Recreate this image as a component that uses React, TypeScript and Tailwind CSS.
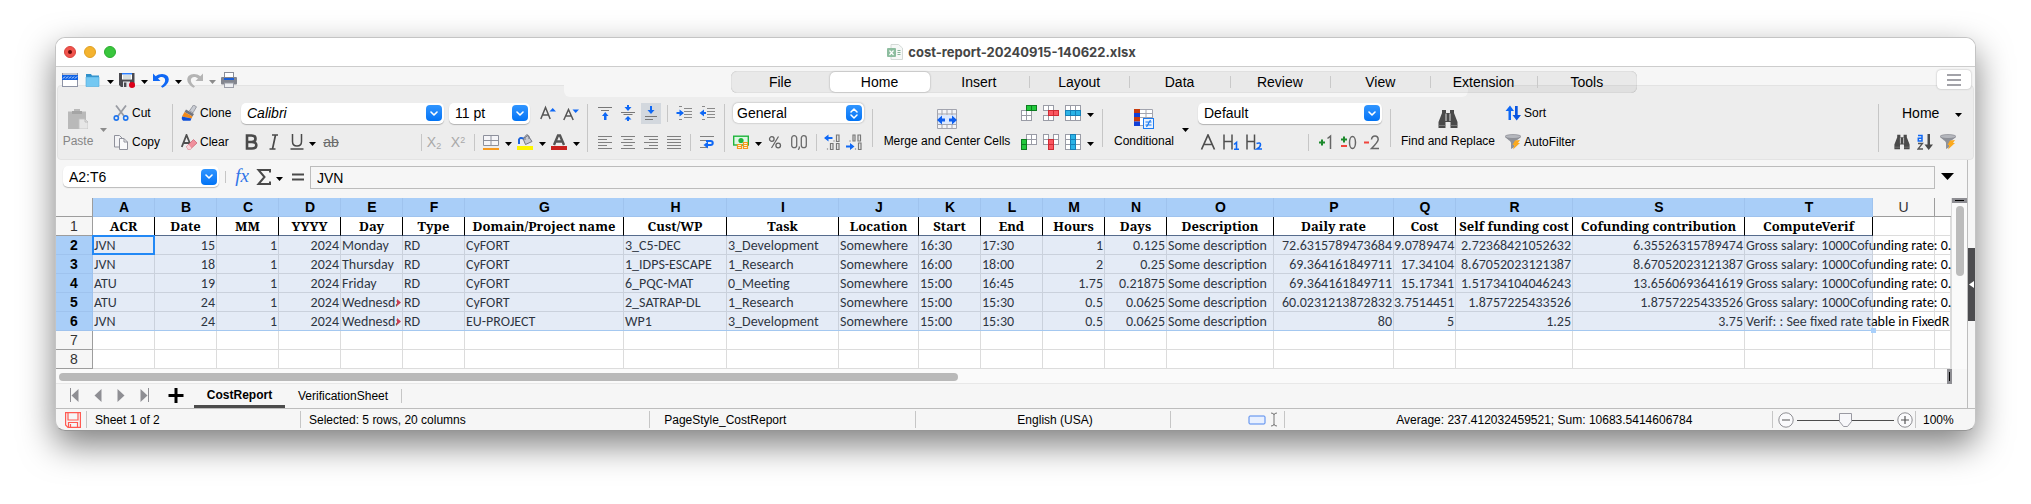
import React from "react";
import type { ReactNode } from "react";

/* ---------- drawing helpers ---------- */

function Ic({ s = 16, vb = 16, children }: { s?: number; vb?: number; children: ReactNode }) {
  return (
    <svg width={s} height={s} viewBox={`0 0 ${vb} ${vb}`} fill="none" className="shrink-0" aria-hidden="true">
      {children}
    </svg>
  );
}

function Caret({ label, dim = false }: { label: string; dim?: boolean }) {
  return (
    <button aria-label={label} className="flex h-5 w-[10px] shrink-0 items-center justify-center pt-1">
      <svg width="7" height="4" viewBox="0 0 7 4" aria-hidden="true">
        <path d="M0 0H7L3.5 4Z" fill={dim ? "#8c8c8c" : "#000"} />
      </svg>
    </button>
  );
}

function Tool({ label, on = false, children }: { label: string; on?: boolean; children: ReactNode }) {
  return (
    <button
      aria-label={label}
      className={"flex h-[21px] w-5 shrink-0 items-center justify-center " + (on ? "bg-[#d3d8de]" : "")}
    >
      {children}
    </button>
  );
}

function Sep({ tall = "h-[48px]" }: { tall?: string }) {
  return <div className={"w-px shrink-0 self-center bg-[#c6c6c6] " + tall} />;
}

function Chevron() {
  return (
    <span className="flex size-4 shrink-0 items-center justify-center rounded bg-linear-to-b from-[#2f95ff] to-[#0073f5]">
      <svg width="8" height="5" viewBox="0 0 8 5" fill="none" aria-hidden="true">
        <path d="M1 1L4 4L7 1" stroke="#fff" strokeWidth="1.6" strokeLinecap="round" strokeLinejoin="round" />
      </svg>
    </span>
  );
}

function Combo({ label, value, className }: { label: string; value: string; className: string }) {
  return (
    <div className={"flex h-[21px] shrink-0 items-center rounded-[5px] bg-white pr-[2px] pl-[6px] shadow-[0_1px_1px_rgba(0,0,0,0.25)] " + className}>
      <input aria-label={label} defaultValue={value} className="h-5 w-full min-w-0 bg-transparent text-sm leading-5 outline-none" />
      <button aria-label={`Open ${label}`} className="shrink-0">
        <Chevron />
      </button>
    </div>
  );
}

/* ---------- icons ---------- */

const Calc = () => (
  <Ic>
    <rect x="0.5" y="1.5" width="15" height="13" fill="#fff" stroke="#8d93a5" />
    <rect x="1" y="1" width="14" height="2" fill="#c2c6d2" />
    <rect x="0" y="3" width="16" height="5" fill="#0f62e6" />
    <path d="M1 6.5l2-2M4 6.5l2-2M7 6.5l2-2M10 6.5l2-2M13 6.5l2-2" stroke="#fff" strokeWidth="0.9" />
  </Ic>
);
const Folder = () => (
  <Ic>
    <path d="M1 2h5l1 1.5h7V14H1Z" fill="#2f8fc9" />
    <path d="M1 5h13v9.5H1Z" fill="#74c8f2" stroke="#4aa9dc" strokeWidth="0.6" />
  </Ic>
);
const Save = () => (
  <Ic>
    <path d="M0 1h15.5v14H2l-2-2Z" fill="#4a4a4f" />
    <rect x="3" y="1" width="10" height="6.5" fill="#fff" />
    <path d="M3 1.7h10" stroke="#2a7fff" strokeWidth="1.4" />
    <path d="M4 4h8M4 6h8" stroke="#9aa" strokeWidth="0.8" />
    <rect x="4" y="9.5" width="7" height="5.5" fill="#e3e5ea" />
    <rect x="5" y="10.5" width="2.4" height="4.5" fill="#4a4a4f" />
    <circle cx="13" cy="13" r="3" fill="#dc0019" />
  </Ic>
);
const Turn = ({ flip = false }: { flip?: boolean }) => (
  <Ic>
    <g transform={flip ? "translate(16 0) scale(-1 1)" : undefined}>
      <path d="M0 1.5V9H7.5L5 6.6C6.5 5 9.5 4.300 11.300 6C13 7.700 12.300 11 8 14.500L9.500 15.800C15.500 12.500 17.300 7.500 14.500 4C11.500 1 6 1.300 2.700 4.300Z" fill={flip ? "#b4b4b4" : "#0f68f5"} />
    </g>
  </Ic>
);
const Printer = () => (
  <Ic>
    <rect x="3.5" y="0.5" width="9" height="5" fill="#fff" stroke="#8a8e99" />
    <rect x="0" y="5" width="16" height="7.5" rx="1" fill="#83868f" />
    <rect x="3" y="6" width="10" height="2" fill="#1a5fd8" />
    <rect x="3.500" y="11" width="9" height="4.500" fill="#eceef2" stroke="#9a9da8" />
  </Ic>
);
const PasteIcon = () => (
  <Ic s={20} vb={20}>
    <path d="M0 2.500h6V0h6v2.500h6V20H0Z" fill="#b9b9b9" />
    <rect x="4" y="2" width="10" height="3" fill="#a5a5a5" />
    <path d="M11 10h6l3 3v7h-9Z" fill="#e6e6e6" stroke="#c2c2c2" strokeWidth="0.8" />
    <path d="M17 10v3h3" stroke="#b5b5b5" strokeWidth="0.8" />
  </Ic>
);
const CutIcon = () => (
  <Ic>
    <path d="M3 0.500L11 11M13 0.500L5 11" stroke="#9a9ca3" strokeWidth="1.800" />
    <circle cx="3.300" cy="13" r="2.100" stroke="#1f75ee" strokeWidth="1.600" />
    <circle cx="12.700" cy="13" r="2.100" stroke="#1f75ee" strokeWidth="1.600" />
  </Ic>
);
const CopyIcon = () => (
  <Ic>
    <path d="M1.500 1.500h5l3 3v8.500h-8Z" fill="#f3f3f5" stroke="#8f919b" />
    <path d="M6.500 4.500h4.500l3.500 3.500v7.500h-8Z" fill="#fafafb" stroke="#8f919b" />
    <path d="M11 4.500v3.500h3.500" stroke="#8f919b" />
  </Ic>
);
const CloneIcon = () => (
  <Ic>
    <path d="M12.500 0l3 1.800-3.500 6-3.500-2Z" fill="#c9ccd3" stroke="#80838d" strokeWidth="0.700" />
    <path d="M5 4.500l8 4.500-1.500 2.500-8-4.500Z" fill="#72757f" />
    <path d="M3.500 7l8 4.500-1 2-9.500-2Z" fill="#f08a1d" />
    <path d="M1 11.500l9.500 2-1 2.200H2Q0 14 1 11.500Z" fill="#0d4fd8" />
  </Ic>
);
const ClearIcon = () => (
  <Ic>
    <path d="M0.800 13L5.500 1L10 12M2.500 9h6" stroke="#505050" strokeWidth="1.800" />
    <path d="M5.500 12.500L12.500 5.500L16 9L9 15.500H7Z" fill="#f0909d" stroke="#cc5f70" strokeWidth="0.700" />
    <path d="M5.500 12.500l2-2 3 3.500-1.500 1.500H7Z" fill="#fbd5da" />
  </Ic>
);
const SizeIcon = ({ up }: { up: boolean }) => (
  <Ic>
    <path d={up ? "M0.800 14L5.500 2.500L10.200 14M2.500 10h6" : "M0.800 15L5.500 4.500L10.200 15M2.500 11h6"} stroke="#555" strokeWidth="1.500" />
    <path d={up ? "M9.500 6.500h6.500L12.700 3Z" : "M9.500 4.500h6.500L12.700 8Z"} fill="#0f68f5" />
  </Ic>
);
const Lines = ({ kind }: { kind: "l" | "c" | "r" | "j" }) => {
  const [a, b] = { l: [1, 10], c: [3.5, 12.5], r: [6, 15], j: [1, 15] }[kind];
  return (
    <Ic>
      <path d={`M1 2.500H15M${a} 5.500H${b}M1 8.500H15M${a} 11.500H${b}M1 14.500H15`} stroke="#808080" />
    </Ic>
  );
};
const VTop = () => (
  <Ic>
    <path d="M1 2.500H15M4 5.500H12" stroke="#777" />
    <path d="M7 15h2.500v-4h2L8.200 7L5 11h2Z" fill="#0f68f5" />
  </Ic>
);
const VMid = () => (
  <Ic>
    <path d="M1 7.500H15M3.500 9.500H12.500" stroke="#777" />
    <path d="M7 0h2v2h2.500L8 6L4.500 2H7ZM7 16.500h2v-2h2.500L8 11l-3.500 3.500H7Z" fill="#0f68f5" />
  </Ic>
);
const VBot = () => (
  <Ic>
    <path d="M2 11.500H14M2 14.500H10" stroke="#777" />
    <path d="M7 1h2v4h2.500L8 9L4.500 5H7Z" fill="#0f68f5" />
  </Ic>
);
const Indent = ({ left = false }: { left?: boolean }) => (
  <Ic>
    <path d="M3 1.500H6M8 3.500H16M8 6.500H16M8 9.500H16M8 12.500H16M3 14.500H6" stroke="#8a8a8a" />
    <path d={left ? "M7 7v2H5v2.500L0.500 8L5 4.500V7Z" : "M0.500 7v2h3v2.500L8 8L3.500 4.500V7Z"} fill="#0f68f5" />
  </Ic>
);
const Wrap = () => (
  <Ic>
    <path d="M1 2.500H15M1 6.500H7M1 13.500H8" stroke="#808080" />
    <path d="M7 7H11.500C14.500 7 14.500 11 11.500 11H8" stroke="#0f68f5" strokeWidth="2" />
    <path d="M9 7.500v7L4.500 11Z" fill="#0f68f5" />
  </Ic>
);
const BordersIcon = () => (
  <Ic>
    <path d="M0.500 1.500h15v10h-15ZM8 1.500v10M0.500 6.500h15" stroke="#8d909c" fill="#f5f5f8" />
    <rect x="0" y="14" width="16" height="2" fill="#f79a1e" />
  </Ic>
);
const FillIcon = () => (
  <Ic>
    <path d="M6 4.500L11 1.500L15 7.500L8.500 10.500Z" fill="#c7cad2" stroke="#747782" />
    <path d="M8 6V2.500Q10 -1 12 2.500V5" stroke="#747782" />
    <path d="M2 10V5.500Q3 3 6.500 4.500" stroke="#1c64dd" strokeWidth="2" />
    <rect x="0" y="12" width="16" height="4" fill="#fdf500" />
  </Ic>
);
const ColorIcon = () => (
  <Ic>
    <path d="M3 11L7 1.500h2L13 11M5 7.500h6" stroke="#555" strokeWidth="2.400" />
    <rect x="0" y="12" width="16" height="4" fill="#c9211e" />
  </Ic>
);
const Money = () => (
  <Ic>
    <rect x="0.700" y="2.200" width="14.600" height="8.800" fill="#dff7e4" stroke="#1fb53c" strokeWidth="1.400" />
    <circle cx="8" cy="6.500" r="2.600" fill="#1fb53c" />
    <path d="M4 10h5v5H4ZM10 8h5v7h-5Z" fill="#fff3df" />
    <path d="M4.500 10.500h4v4h-4ZM4.500 12.500h4M10.500 8.500h4v6h-4ZM10.500 10.500h4M10.500 12.500h4" stroke="#f59a1c" strokeWidth="1.200" />
  </Ic>
);
const PercentIcon = () => (
  <Ic>
    <circle cx="4.800" cy="5" r="2.300" stroke="#636363" strokeWidth="1.300" />
    <circle cx="11.200" cy="11.500" r="2.300" stroke="#636363" strokeWidth="1.300" />
    <path d="M11.500 2.500L4.500 14" stroke="#636363" strokeWidth="1.200" />
  </Ic>
);
const NumberIcon = () => (
  <Ic>
    <rect x="0.700" y="1.700" width="5" height="12" rx="2.500" stroke="#6a6a6a" strokeWidth="1.300" />
    <rect x="10.300" y="1.700" width="5" height="12" rx="2.500" stroke="#6a6a6a" strokeWidth="1.300" />
    <path d="M8.300 12.500v1.500l-1 1.800" stroke="#6a6a6a" strokeWidth="1.300" />
  </Ic>
);
const Decimal = ({ add = false }: { add?: boolean }) => (
  <Ic>
    {add ? (
      <>
        <path d="M4 7.500v-1M7 1h2v6H7ZM12 1h2.500v6H12Z" stroke="#777" strokeWidth="1.200" />
        <path d="M9.500 15.500v-1M12.500 9h2.500v6.500h-2.500Z" stroke="#777" strokeWidth="1.200" />
        <path d="M0 11.500h4V9L8.500 12.500L4 16v-2.500H0Z" fill="#0f68f5" />
      </>
    ) : (
      <>
        <path d="M8.500 3H4.500V0.500L0 4l4.500 3.500V5h4Z" fill="#0f68f5" />
        <path d="M10 7.500v-1M12.500 1H15v6.500h-2.500ZM3.500 15.500v-1M6.500 9.500H9v6H6.500ZM12.500 9.500H15v6h-2.500Z" stroke="#777" strokeWidth="1.200" />
      </>
    )}
  </Ic>
);
const Merge = () => (
  <Ic s={20} vb={20}>
    <path d="M0.500 0.500h19v19h-19ZM0.500 5h19M0.500 15.500h19M5 0.500v19M10 0.500v19M15 0.500v19" stroke="#a3a5af" fill="#f4f4f6" />
    <rect x="1" y="6" width="18" height="9" fill="#dce9ff" />
    <path d="M0 11l5-4.500v3h3v3H5v3ZM20 11l-5-4.500v3h-3v3h3v3Z" fill="#0f5fee" />
  </Ic>
);
const Cells = ({ fill, edge, hot, rest }: { fill: string; edge: string; hot: number[][]; rest: number[][] }) => (
  <Ic>
    {rest.map(([x, y]) => (
      <rect key={`r${x}-${y}`} x={x + 0.5} y={y + 0.5} width="5" height="5" fill="#fff" stroke="#9a9ca6" />
    ))}
    {hot.map(([x, y]) => (
      <rect key={`h${x}-${y}`} x={x + 0.5} y={y + 0.5} width="5" height="5" fill={fill} stroke={edge} />
    ))}
  </Ic>
);
const InsRow = () => <Cells fill="#22c93c" edge="#0d7d20" hot={[[5, 0], [10, 0]]} rest={[[0, 5], [5, 5], [0, 10], [5, 10]]} />;
const InsCol = () => <Cells fill="#22c93c" edge="#0d7d20" hot={[[0, 5], [0, 10]]} rest={[[5, 0], [10, 0], [5, 5], [10, 5]]} />;
const DelRow = () => <Cells fill="#fb5660" edge="#cf2a33" hot={[[5, 5], [10, 5]]} rest={[[0, 0], [5, 0], [0, 10], [5, 10]]} />;
const DelCol = () => <Cells fill="#fb5660" edge="#cf2a33" hot={[[5, 5], [5, 10]]} rest={[[0, 0], [10, 0], [0, 5], [10, 5]]} />;
const SelRow = () => <Cells fill="#2bb3e6" edge="#1580b8" hot={[[0, 5], [5, 5], [10, 5]]} rest={[[0, 0], [5, 0], [10, 0], [0, 10], [5, 10], [10, 10]]} />;
const SelCol = () => <Cells fill="#2bb3e6" edge="#1580b8" hot={[[5, 0], [5, 5], [5, 10]]} rest={[[0, 0], [0, 5], [0, 10], [10, 0], [10, 5], [10, 10]]} />;
const Conditional = () => (
  <Ic s={20} vb={20}>
    <path d="M0.500 0.500h18v16h-18ZM6 4.500h12.500M6 8.500h12.500M12 0.500v16" stroke="#a3a5af" fill="#fff" />
    <path d="M0 0h6v4H0ZM0 8h6v4.500H0Z" fill="#c73a0b" />
    <path d="M0 4h6v4H0ZM0 12.500h6V17H0Z" fill="#0f3fd8" />
    <rect x="9.500" y="9.500" width="10" height="10" fill="#eaf3ff" stroke="#1f7cf0" />
    <path d="M11.500 13h6M11.500 16h6M16.500 11l-4 7" stroke="#1f7cf0" strokeWidth="1.200" />
  </Ic>
);
const Binoc = ({ s = 16 }: { s?: number }) => (
  <Ic s={s} vb={20}>
    <path d="M4 1h4v3h4V1h4v3l3.500 9v6h-7v-6H7.500v6h-7v-6L4 4Z" fill="#4a4a4a" />
    <path d="M8 4.500V12M12 4.500V12" stroke="#ededed" strokeWidth="0.900" />
    <path d="M0.500 16.500h7M12.500 16.500h7" stroke="#8d8d8d" strokeWidth="0.700" />
  </Ic>
);
const SortIcon = () => (
  <Ic>
    <path d="M3.500 15V6H0.500L5 0.500L9 6H6V15Z" fill="#0f68f5" />
    <path d="M10 1V10H7.500L11.700 15.500L16 10H12.700V1Z" fill="#0a55e0" />
  </Ic>
);
const Filter = () => (
  <Ic>
    <path d="M0 2.500C2 5.500 6 7 6 9v6l3.500-2V9C9.500 7 14 5.500 16 2.500Z" fill="#8f9299" />
    <ellipse cx="8" cy="2.500" rx="8" ry="2" fill="#b5b7bd" stroke="#7f8289" strokeWidth="0.600" />
    <path d="M10 6.500L15 6l-2 3h2L8 15.500l1.500-4.500H7.500Z" fill="#fba91e" />
  </Ic>
);
const AZ = () => (
  <Ic>
    <path d="M1 1.500h4v5.500H1.300V4.200H5" stroke="#0f68f5" strokeWidth="1.500" />
    <path d="M1 9.500H5.500L1 15H6" stroke="#555" strokeWidth="1.300" />
    <path d="M10.500 0h2.500v10.500h3L11.700 16L7.500 10.500h3Z" fill="#4a4a4a" />
  </Ic>
);
const SheetDoc = () => (
  <Ic>
    <path d="M4 0.500h7.500l4 3.500v11.500H4Z" fill="#f6f8f7" stroke="#d4dad7" />
    <rect x="0" y="4" width="9" height="9" rx="1" fill="#8dbd9f" />
    <path d="M2.500 6.500l4 4.500M6.500 6.500l-4 4.500" stroke="#fff" strokeWidth="1.200" />
    <path d="M10.500 6.500h3M10.500 8.500h3M10.500 10.500h3" stroke="#86b598" />
  </Ic>
);
const Disk = () => (
  <Ic>
    <path d="M0.600 0.600h14.800v14.800H3L0.600 13Z" stroke="#ff5a52" strokeWidth="1.200" />
    <path d="M3 0.600v7.400h10V0.600M3.500 15.400v-4.900h9v4.900M5.500 12v3" stroke="#ff5a52" strokeWidth="1.200" />
  </Ic>
);
const Nav = ({ d, bar }: { d: string; bar?: number }) => (
  <Ic>
    <path d={d} fill="#8e8e93" />
    {bar !== undefined && <path d={`M${bar} 1v14`} stroke="#8e8e93" />}
  </Ic>
);

/* ---------- header ---------- */

const TABS: [string, string][] = [
  ["File", "flex-[100]"],
  ["Home", "flex-[100]"],
  ["Insert", "flex-[100]"],
  ["Layout", "flex-[100]"],
  ["Data", "flex-[100]"],
  ["Review", "flex-[100]"],
  ["View", "flex-[100]"],
  ["Extension", "flex-[106]"],
  ["Tools", "flex-[100]"],
];

function TitleBar() {
  return (
    <div className="grid h-[29px] grid-cols-[1fr_auto_1fr] items-center border-b border-[#cdcdcd] bg-white px-2">
      <div className="flex gap-2">
        <button aria-label="Close" className="flex size-3 items-center justify-center rounded-full border border-[#d8433c] bg-[#f0544d]">
          <span className="size-1 rounded-full bg-[#660a08]" />
        </button>
        <button aria-label="Minimize" className="size-3 rounded-full border border-[#dfa023] bg-[#f4b32f]" />
        <button aria-label="Zoom window" className="size-3 rounded-full border border-[#2bac2f] bg-[#39c63d]" />
      </div>
      <div className="flex items-center gap-[5px] pr-2">
        <SheetDoc />
        <h1 className="font-['Inter',sans-serif] text-[13px] leading-4 font-bold text-[#454545]">cost-report-20240915-140622.xlsx</h1>
      </div>
      <div />
    </div>
  );
}

function TopRow() {
  return (
    <div className="grid h-[30px] grid-cols-[508fr_904fr_507fr]">
      <div className="flex h-[26px] items-center pl-1">
        <Tool label="New spreadsheet"><Calc /></Tool>
        <div className="ml-[3px] flex items-center gap-[2px]">
          <Tool label="Open"><Folder /></Tool>
          <Caret label="Open recent" />
          <Tool label="Save"><Save /></Tool>
          <Caret label="Save options" />
          <Tool label="Undo"><Turn /></Tool>
          <Caret label="Undo history" />
          <Tool label="Redo"><Turn flip /></Tool>
          <Caret label="Redo history" dim />
          <Tool label="Print"><Printer /></Tool>
        </div>
      </div>
      <div className="rounded-b-[6px] bg-[#f6f6f6]" />
      <div className="flex justify-end pt-[3px] pr-1">
        <button aria-label="Menu" className="flex h-[19px] w-[34px] flex-col items-center justify-center gap-[3px] rounded bg-white shadow-[0_0_2px_rgba(0,0,0,0.3)]">
          <span className="h-[2px] w-[14px] bg-[#a2a2a8]" />
          <span className="h-[2px] w-[14px] bg-[#a2a2a8]" />
          <span className="h-[2px] w-[14px] bg-[#a2a2a8]" />
        </button>
      </div>
    </div>
  );
}

function TabStrip() {
  return (
    <div role="tablist" className="absolute inset-x-0 top-1 grid grid-cols-[675fr_906fr_338fr]">
      <div className="col-start-2 flex h-[22px] items-center rounded-[6px] bg-black/5 shadow-[inset_0_0_1px_rgba(0,0,0,0.35)]">
        {TABS.map(([t, w], i) => (
          <button
            key={t}
            role="tab"
            aria-selected={t === "Home"}
            className={
              w +
              " flex items-center justify-center pr-px text-sm leading-5 " +
              (t === "Home"
                ? "h-5 rounded-[5px] bg-white shadow-[0_0_2px_rgba(0,0,0,0.35)]"
                : "h-3 " + (i > 1 && i < TABS.length - 1 ? "border-r border-[#c9c9c9]" : ""))
            }
          >
            {t}
          </button>
        ))}
      </div>
    </div>
  );
}

const rows = "flex shrink-0 flex-col gap-[7px] pt-[5px]";
const line = "flex h-[22px] items-center";
const small = "flex items-center gap-[3px] text-xs leading-[14px]";
const big = "flex shrink-0 flex-col items-center gap-[5px] pt-3 text-xs leading-[14px] whitespace-nowrap";

function Ribbon() {
  return (
    <div className="flex h-[63px] overflow-hidden pb-px pl-[6px]">
      <button className={big + " w-8 text-[#868686]"}>
        <PasteIcon />
        Paste
      </button>
      <div className="flex items-center px-1">
        <Caret label="Paste options" dim />
      </div>
      <div className={rows + " w-[60px] pl-px"}>
        <div className={line}><button className={small}><CutIcon />Cut</button></div>
        <div className={line}><button className={small}><CopyIcon />Copy</button></div>
      </div>
      <Sep />
      <div className={rows + " w-[68px] pl-2"}>
        <div className={line}><button className={small}><CloneIcon />Clone</button></div>
        <div className={line}><button className={small}><ClearIcon />Clear</button></div>
      </div>
      <div className={rows + " w-[346px]"}>
        <div className={line + " gap-[5px]"}>
          <Combo label="Font name" value="Calibri" className="w-[203px] italic" />
          <Combo label="Font size" value="11 pt" className="w-[81px]" />
          <div className="ml-[3px] flex gap-[3px]">
            <Tool label="Increase size"><SizeIcon up /></Tool>
            <Tool label="Decrease size"><SizeIcon up={false} /></Tool>
          </div>
        </div>
        <div className={line + " justify-between pr-[6px]"}>
          <div className="flex items-center text-[#4d4d4d]">
            <div className="flex items-center gap-[3px]">
              <Tool label="Bold"><Ic><path d="M4 1.500h4.500q4 0 4 3.200t-4 3.300H4Zm0 6.500h5q4.300 0 4.300 3.200t-4.300 3.300H4Z" stroke="#4a4a4a" strokeWidth="2.600" /></Ic></Tool>
              <Tool label="Italic"><Ic><path d="M6 1h6M3.500 15h6M9.500 1l-3 14" stroke="#4a4a4a" strokeWidth="1.700" /></Ic></Tool>
              <Tool label="Underline"><Ic><path d="M3.500 0v7.500q0 4.500 4.500 4.500t4.500-4.500V0M1.500 15h13" stroke="#4a4a4a" strokeWidth="1.500" /></Ic></Tool>
            </div>
            <Caret label="Underline style" />
            <button aria-label="Strikethrough" className="ml-1 w-5 text-center text-sm leading-5 text-[#6b6b6b] line-through">ab</button>
          </div>
          <div className="flex items-center gap-[2px]">
            <Sep tall="h-[17px]" />
            <button aria-label="Subscript" className="w-5 text-center text-sm leading-5 text-[#a9a9a9]">X<sub className="text-[9px]">2</sub></button>
            <button aria-label="Superscript" className="ml-[2px] w-5 text-center text-sm leading-5 text-[#a9a9a9]">X<sup className="text-[9px]">2</sup></button>
            <div className="mx-1 flex"><Sep tall="h-[17px]" /></div>
            <Tool label="Borders"><BordersIcon /></Tool>
            <Caret label="Border styles" />
            <Tool label="Background color"><FillIcon /></Tool>
            <Caret label="Background colors" />
            <Tool label="Font color"><ColorIcon /></Tool>
            <Caret label="Font colors" />
          </div>
        </div>
      </div>
      <Sep />
      <div className={rows + " w-[136px] pl-[7px]"}>
        <div className={line + " gap-[3px]"}>
          <Tool label="Align top"><VTop /></Tool>
          <Tool label="Center vertically"><VMid /></Tool>
          <Tool label="Align bottom" on><VBot /></Tool>
          <div className="mx-[3px] flex"><Sep tall="h-[17px]" /></div>
          <Tool label="Increase indent"><Indent /></Tool>
          <Tool label="Decrease indent"><Indent left /></Tool>
        </div>
        <div className={line + " gap-[3px]"}>
          <Tool label="Align left"><Lines kind="l" /></Tool>
          <Tool label="Align center"><Lines kind="c" /></Tool>
          <Tool label="Align right"><Lines kind="r" /></Tool>
          <Tool label="Justify"><Lines kind="j" /></Tool>
          <div className="mx-[3px] flex"><Sep tall="h-[17px]" /></div>
          <Tool label="Wrap text"><Wrap /></Tool>
        </div>
      </div>
      <Sep />
      <div className={rows + " w-[147px] pl-[6px]"}>
        <div className={line}>
          <label className="relative ml-[2px] flex">
            <select aria-label="Number format" className="h-5 w-[131px] appearance-none rounded-[5px] bg-white pl-1 text-sm leading-5 shadow-[0_0_2px_rgba(0,0,0,0.35)] outline-none">
              <option>General</option>
              <option>Number</option>
              <option>Currency</option>
            </select>
            <span className="pointer-events-none absolute top-[2px] right-[2px] flex size-4 items-center justify-center rounded bg-linear-to-b from-[#2f95ff] to-[#0073f5]">
              <svg width="8" height="11" viewBox="0 0 8 11" fill="none" aria-hidden="true">
                <path d="M1 4L4 1L7 4M1 7L4 10L7 7" stroke="#fff" strokeWidth="1.500" strokeLinecap="round" strokeLinejoin="round" />
              </svg>
            </span>
          </label>
        </div>
        <div className={line + " gap-[2px]"}>
          <Tool label="Currency"><Money /></Tool>
          <Caret label="Currencies" />
          <Tool label="Percent"><PercentIcon /></Tool>
          <div className="mx-[2px] flex"><Tool label="Number"><NumberIcon /></Tool></div>
          <div className="mx-[3px] flex"><Sep tall="h-[17px]" /></div>
          <Tool label="Delete decimal place"><Decimal /></Tool>
          <Tool label="Add decimal place"><Decimal add /></Tool>
        </div>
      </div>
      <Sep tall="h-[38px]" />
      <button className={big + " w-[146px] pl-[2px]"}>
        <Merge />
        Merge and Center Cells
      </button>
      <div className={rows + " w-[83px]"}>
        <div className={line + " gap-[2px]"}>
          <Tool label="Insert rows"><InsRow /></Tool>
          <Tool label="Delete rows"><DelRow /></Tool>
          <Tool label="Select rows"><SelRow /></Tool>
          <Caret label="Row options" />
        </div>
        <div className={line + " gap-[2px]"}>
          <Tool label="Insert columns"><InsCol /></Tool>
          <Tool label="Delete columns"><DelCol /></Tool>
          <Tool label="Select columns"><SelCol /></Tool>
          <Caret label="Column options" />
        </div>
      </div>
      <Sep tall="h-[38px]" />
      <button className={big + " ml-2 w-[66px]"}>
        <Conditional />
        Conditional
      </button>
      <div className="flex items-center pr-2 pl-[3px]">
        <Caret label="Conditional options" />
      </div>
      <div className={rows + " w-[192px]"}>
        <div className={line}>
          <Combo label="Cell style" value="Default" className="w-[184px]" />
        </div>
        <div className={line + " justify-between pr-2"}>
          <div className="flex gap-[3px]">
            <Tool label="Default style"><Ic><path d="M1.500 15.500L8 1l6.500 14.500M4 10.500h8" stroke="#4f4f4f" strokeWidth="1.700" /></Ic></Tool>
            <Tool label="Heading 1"><Ic><path d="M1 0.500v15M9 0.500v15M1 7.500h8" stroke="#4f4f4f" strokeWidth="1.500" /><path d="M11 10.500l2.500-2v7M11 15.200h5" stroke="#0f68f5" strokeWidth="1.600" /></Ic></Tool>
            <Tool label="Heading 2"><Ic><path d="M1 0.500v15M8.500 0.500v15M1 7.500h7.500" stroke="#4f4f4f" strokeWidth="1.500" /><path d="M10.500 9.500q4-1.500 4 1t-3.500 4.500h5" stroke="#0f68f5" strokeWidth="1.600" /></Ic></Tool>
          </div>
          <div className="flex items-center gap-[3px]">
            <div className="mr-1 flex"><Sep tall="h-[17px]" /></div>
            <Tool label="Good"><Ic><path d="M1 8.500h6M4 5.500v6" stroke="#1c8a2c" strokeWidth="2" /><path d="M9.500 4.500l3-2.500v13" stroke="#666" strokeWidth="1.500" /></Ic></Tool>
            <Tool label="Neutral"><Ic><path d="M0 5.500h6M3 2.500v6" stroke="#1c8a2c" strokeWidth="2" /><path d="M0 12h6" stroke="#f0443c" strokeWidth="2" /><ellipse cx="11.500" cy="8.500" rx="3" ry="6" stroke="#666" strokeWidth="1.500" /></Ic></Tool>
            <Tool label="Bad"><Ic><path d="M0 8.500h5" stroke="#f0443c" strokeWidth="2" /><path d="M7.500 5.500Q8 2 11 2t3.200 3.500Q14 8 7.500 14.500H15" stroke="#666" strokeWidth="1.500" /></Ic></Tool>
          </div>
        </div>
      </div>
      <Sep tall="h-[38px]" />
      <button className={big + " ml-2 w-[98px]"}>
        <Binoc s={20} />
        Find and Replace
      </button>
      <div className={rows + " pl-2"}>
        <div className={line}><button className={small}><SortIcon />Sort</button></div>
        <div className={line}><button className={small}><Filter />AutoFilter</button></div>
      </div>
      <div className="flex-1" />
      <Sep />
      <div className={rows + " w-[96px]"}>
        <div className={line + " justify-between pr-3 pl-[23px]"}>
          <button className="text-sm leading-5">Home</button>
          <Caret label="Choose ribbon" />
        </div>
        <div className={line + " gap-[3px] pl-[13px]"}>
          <Tool label="Find"><Binoc /></Tool>
          <Tool label="Sort ascending"><AZ /></Tool>
          <Tool label="Filter"><Filter /></Tool>
        </div>
      </div>
    </div>
  );
}

function FormulaBar() {
  return (
    <div className="flex h-[38px] items-start pt-[6px] pl-[7px]">
      <Combo label="Name box" value="A2:T6" className="w-[156px]" />
      <div className="mx-[6px] mt-[5px] h-3 w-px bg-[#c6c6c6]" />
      <button className="w-5 text-center font-['Liberation_Serif',serif] text-[19px] leading-5 text-[#2f74e8] italic">fx</button>
      <div className="ml-[2px] flex items-center">
        <Tool label="Select function">
          <Ic><path d="M14 3.500V1H2.500L8.500 8L2.500 15H14V12.500" stroke="#4a4a4a" strokeWidth="2" /></Ic>
        </Tool>
        <Caret label="Functions" />
      </div>
      <div className="mr-[2px] ml-1">
        <Tool label="Formula"><Ic><path d="M2 5.500h12M2 10.500h12" stroke="#4a4a4a" strokeWidth="2" /></Ic></Tool>
      </div>
      <input aria-label="Formula input" defaultValue="JVN" className="h-[23px] min-w-0 flex-1 border border-[#bcbcbc] bg-[#f6f6f6] pl-[6px] text-sm leading-5 outline-none" />
      <button aria-label="Expand formula bar" className="flex h-5 w-8 items-center justify-center pr-2">
        <svg width="13" height="7" viewBox="0 0 13 7" aria-hidden="true"><path d="M0 0H13L6.500 7Z" fill="#000" /></svg>
      </button>
    </div>
  );
}

/* ---------- sheet ---------- */

type Col = { id: string; w: string; head: string; right?: boolean };
const COLS: Col[] = [
  { id: "A", w: "w-[62px]", head: "ACR" },
  { id: "B", w: "w-[62px]", head: "Date", right: true },
  { id: "C", w: "w-[62px]", head: "MM", right: true },
  { id: "D", w: "w-[62px]", head: "YYYY", right: true },
  { id: "E", w: "w-[62px]", head: "Day" },
  { id: "F", w: "w-[62px]", head: "Type" },
  { id: "G", w: "w-[159px]", head: "Domain/Project name" },
  { id: "H", w: "w-[103px]", head: "Cust/WP" },
  { id: "I", w: "w-[112px]", head: "Task" },
  { id: "J", w: "w-[80px]", head: "Location" },
  { id: "K", w: "w-[62px]", head: "Start" },
  { id: "L", w: "w-[62px]", head: "End" },
  { id: "M", w: "w-[62px]", head: "Hours", right: true },
  { id: "N", w: "w-[62px]", head: "Days", right: true },
  { id: "O", w: "w-[107px]", head: "Description" },
  { id: "P", w: "w-[120px]", head: "Daily rate", right: true },
  { id: "Q", w: "w-[62px]", head: "Cost", right: true },
  { id: "R", w: "w-[117px]", head: "Self funding cost", right: true },
  { id: "S", w: "w-[172px]", head: "Cofunding contribution", right: true },
  { id: "T", w: "w-[128px]", head: "ComputeVerif" },
];

const GROSS = "Gross salary: 1000Cofunding rate: 0.";
const DATA: string[][] = [
  ["JVN", "15", "1", "2024", "Monday", "RD", "CyFORT", "3_C5-DEC", "3_Development", "Somewhere", "16:30", "17:30", "1", "0.125", "Some description", "72.6315789473684", "9.0789474", "2.72368421052632", "6.35526315789474", GROSS],
  ["JVN", "18", "1", "2024", "Thursday", "RD", "CyFORT", "1_IDPS-ESCAPE", "1_Research", "Somewhere", "16:00", "18:00", "2", "0.25", "Some description", "69.364161849711", "17.34104", "8.67052023121387", "8.67052023121387", GROSS],
  ["ATU", "19", "1", "2024", "Friday", "RD", "CyFORT", "6_PQC-MAT", "0_Meeting", "Somewhere", "15:00", "16:45", "1.75", "0.21875", "Some description", "69.364161849711", "15.17341", "1.51734104046243", "13.6560693641619", GROSS],
  ["ATU", "24", "1", "2024", "Wednesday", "RD", "CyFORT", "2_SATRAP-DL", "1_Research", "Somewhere", "15:00", "15:30", "0.5", "0.0625", "Some description", "60.0231213872832", "3.7514451", "1.8757225433526", "1.8757225433526", GROSS],
  ["JVN", "24", "1", "2024", "Wednesday", "RD", "EU-PROJECT", "WP1", "3_Development", "Somewhere", "15:00", "15:30", "0.5", "0.0625", "Some description", "80", "5", "1.25", "3.75", "Verif: : See fixed rate table in FixedR"],
];

const gridCell = "h-[19px] border-r border-b border-[#dcdcdc]";
const pad = " px-0 pt-px pb-0 ";
const hotHead = "h-[19px] border-r border-b border-[#9fc3ee] bg-[#a9cef8] pt-px pr-0 pb-0 pl-px font-bold";
const rowHead = "h-[19px] border-r border-b border-[#9d9d9d] bg-[#f6f6f6] px-0 pt-px pb-0 text-sm leading-[17px] font-normal text-[#333]";

function Sheet() {
  return (
    <div className="relative min-w-0 flex-1 overflow-hidden border-r border-[#dcdcdc] bg-white">
      <table className="w-full table-fixed border-separate border-spacing-0">
        <colgroup>
          <col className="w-[37px]" />
          {COLS.map((c) => (
            <col key={c.id} className={c.w} />
          ))}
          <col className="w-[62px]" />
          <col />
        </colgroup>
        <thead>
          <tr className="bg-[#f6f6f6] text-sm leading-[17px]">
            <th className="h-[19px] border-r border-b border-[#9d9d9d] p-0" />
            {COLS.map((c) => (
              <th key={c.id} scope="col" className={hotHead}>{c.id}</th>
            ))}
            <th scope="col" className={"border-r border-b border-[#9d9d9d] font-normal text-[#333]" + pad}>U</th>
            <th className="border-b border-[#9d9d9d] p-0" />
          </tr>
        </thead>
        <tbody>
          <tr>
            <th scope="row" className={rowHead}>1</th>
            {COLS.map((c) => (
              <td
                key={c.id}
                className="h-[19px] border-r border-b border-r-black border-b-[#566b8c] p-0 text-center font-['Noto_Serif','DejaVu_Serif_Condensed','DejaVu_Serif',serif] text-[13px] leading-[18px] font-bold whitespace-nowrap"
              >
                {c.head}
              </td>
            ))}
            <td className={gridCell} />
            <td className={gridCell} />
          </tr>
          {DATA.map((r, i) => (
            <tr key={i} className="font-['Carlito','Lato',sans-serif] text-sm leading-[17px] whitespace-nowrap">
              <th scope="row" className={"h-[19px] border-r border-b border-[#9fc3ee] bg-[#a9cef8] font-['Liberation_Sans',sans-serif] font-bold" + pad}>{i + 2}</th>
              {r.map((v, j) => (
                <td
                  key={j}
                  className={
                    gridCell + " pt-px pb-0 " + (COLS[j].right ? "pr-px pl-0 text-right" : "pr-0 pl-px") + (v === "Wednesday" ? " relative overflow-hidden" : "")
                  }
                >
                  {v}
                  {v === "Wednesday" && (
                    <span className="absolute inset-y-0 right-0 flex w-[5px] items-center bg-white">
                      <svg width="4" height="7" viewBox="0 0 4 7" aria-hidden="true"><path d="M0 0L4 3.500L0 7Z" fill="#d6101e" /></svg>
                    </span>
                  )}
                </td>
              ))}
              <td className={gridCell} />
              <td className={gridCell} />
            </tr>
          ))}
          {[7, 8].map((n) => (
            <tr key={n}>
              <th scope="row" className={rowHead}>{n}</th>
              {Array.from({ length: 22 }, (_, k) => (
                <td key={k} className={gridCell} />
              ))}
            </tr>
          ))}
        </tbody>
      </table>
      {/* selected range A2:T6 with its active cell and fill handle */}
      <div className="pointer-events-none absolute top-[38px] left-[37px] h-[95px] w-[1780px] border-b border-[#a4c8f0] bg-[rgb(157_182_221/0.28)]">
        <div className="absolute -top-px -left-px h-5 w-[63px] border-2 border-[#2288f5]" />
        <div className="absolute -right-[3px] -bottom-[3px] size-[5px] bg-[#a9d0fb]" />
      </div>
    </div>
  );
}

function VScroll() {
  return (
    <div className="w-[15px] shrink-0 bg-[#fafafa]">
      <div className="flex h-[5px] items-center justify-center bg-[#8e8e93]"><div className="h-px w-[9px] bg-black" /></div>
      <div className="mx-auto mt-[3px] h-[70px] w-2 rounded-full bg-[#bcbcbc]" />
    </div>
  );
}

function SheetTabs() {
  return (
    <div className="flex h-[24px] items-center pl-3">
      <div className="flex gap-[7px] pb-[2px]">
        <button aria-label="First sheet"><Nav d="M10.500 2v13L3.500 8.500Z" bar={2.5} /></button>
        <button aria-label="Previous sheet"><Nav d="M10.500 2v13L3.500 8.500Z" /></button>
        <button aria-label="Next sheet"><Nav d="M3.500 2v13L10.500 8.500Z" /></button>
        <button aria-label="Last sheet"><Nav d="M3.500 2v13L10.500 8.500Z" bar={11.5} /></button>
      </div>
      <button aria-label="Add sheet" className="ml-[15px] pb-[2px]">
        <Ic><path d="M8 1v15M0.500 8.500h15" stroke="#000" strokeWidth="3" /></Ic>
      </button>
      <button className="ml-[10px] h-[24px] w-[91px] border-b-[3px] border-[#4c4c4c] text-xs leading-[14px] font-bold">CostReport</button>
      <button className="px-[13px] pb-px text-xs leading-[14px]">VerificationSheet</button>
      <div className="h-[14px] w-px bg-[#c6c6c6]" />
    </div>
  );
}

function StatusBar() {
  const cell = "flex h-[17px] items-center border-r border-[#c6c6c6]";
  return (
    <div className="grid h-[22px] grid-cols-[31px_214px_349fr_266fr_254fr_114px_488fr_143px_59px] items-center border-t border-[#bdbdbd] text-xs leading-[14px] whitespace-nowrap">
      <div className={cell + " pl-[9px]"}><Disk /></div>
      <div className={cell + " pl-2"}>Sheet 1 of 2</div>
      <div className={cell + " pl-2"}>Selected: 5 rows, 20 columns</div>
      <div className={cell + " pl-[14px]"}>PageStyle_CostReport</div>
      <div className={cell + " justify-center pl-6"}>English (USA)</div>
      <div className={cell + " justify-end gap-1 pr-[6px]"}>
        <svg width="18" height="10" viewBox="0 0 18 10" aria-hidden="true"><rect x="1" y="1" width="16" height="8" rx="1" fill="#e8f0ff" stroke="#4f86ee" /></svg>
        <svg width="8" height="15" viewBox="0 0 8 15" fill="none" aria-hidden="true"><path d="M1 1q3 0 3 2v9q0 2-3 2M7 1q-3 0-3 2M7 14q-3 0-3-2" stroke="#777" /></svg>
      </div>
      <div className={cell + " justify-center pl-8"}>Average: 237.412032459521; Sum: 10683.5414606784</div>
      <div className={cell + " justify-center gap-[3px] pl-[2px]"}>
        <button aria-label="Zoom out"><Ic><circle cx="8" cy="8" r="7.200" stroke="#8e8e93" fill="#fafafc" /><path d="M4 8h8" stroke="#555" strokeWidth="1.200" /></Ic></button>
        <label className="relative flex">
          <svg width="97" height="16" viewBox="0 0 97 16" fill="none" aria-hidden="true">
            <path d="M0 8.500h97" stroke="#4c4c4c" />
            <path d="M42.500 1.500h12v8l-4 5h-4l-4-5Z" fill="#f7f7fa" stroke="#9a9aa2" />
          </svg>
          <input type="range" aria-label="Zoom" defaultValue={50} className="absolute inset-0 w-full opacity-0" />
        </label>
        <button aria-label="Zoom in"><Ic><circle cx="8" cy="8" r="7.200" stroke="#8e8e93" fill="#fafafc" /><path d="M4 8h8M8 4v8" stroke="#555" strokeWidth="1.200" /></Ic></button>
      </div>
      <div className="pl-[7px]">100%</div>
    </div>
  );
}

export default function App() {
  return (
    <div className="bg-white px-[55px] pt-[37px] pb-[73px] font-['Liberation_Sans',Arial,sans-serif] text-black">
      <div className="overflow-hidden rounded-[10px] border border-[#c4c4c4] border-b-[#969696] bg-[#f6f6f6] shadow-[0_14px_34px_rgba(0,0,0,0.5)]">
        <TitleBar />
        <div className="relative">
          <div className="absolute inset-x-px top-[18px] bottom-0 rounded-[4px] border border-[#e3e3e3] bg-[#ededed]" />
          <div className="relative">
            <TopRow />
            <TabStrip />
            <Ribbon />
          </div>
        </div>
        <div className="flex">
          <div className="min-w-0 flex-1">
            <FormulaBar />
            <div className="flex">
              <Sheet />
              <VScroll />
            </div>
            <div className="mr-[15px] flex h-[15px] items-center border-b border-[#e8e8e8] bg-[#fafafa] pl-[3px]">
              <div className="flex-1 pt-[2px]">
                <div className="h-2 w-[899px] rounded-full bg-[#b9b9b9]" />
              </div>
              <div className="flex h-[15px] w-[5px] items-center justify-center bg-[#8e8e93]"><div className="h-[9px] w-px bg-black" /></div>
            </div>
            <SheetTabs />
          </div>
          <div className="flex w-2 shrink-0 items-center border-l border-[#bdbdbd]">
            <button aria-label="Show sidebar" className="flex h-[73px] w-[7px] items-center justify-center bg-[#4c4c4f]">
              <svg width="5" height="7" viewBox="0 0 5 7" aria-hidden="true"><path d="M5 0V7L0 3.500Z" fill="#fff" /></svg>
            </button>
          </div>
        </div>
        <StatusBar />
      </div>
    </div>
  );
}
